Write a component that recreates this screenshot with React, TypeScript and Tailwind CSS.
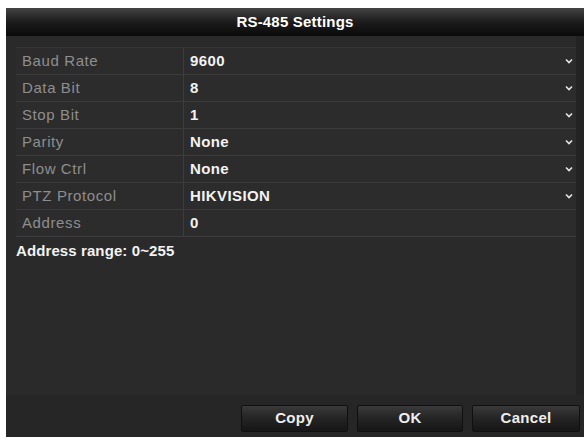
const rows: { label: string; value: string; select: boolean }[] = [
  { label: "Baud Rate", value: "9600", select: true },
  { label: "Data Bit", value: "8", select: true },
  { label: "Stop Bit", value: "1", select: true },
  { label: "Parity", value: "None", select: true },
  { label: "Flow Ctrl", value: "None", select: true },
  { label: "PTZ Protocol", value: "HIKVISION", select: true },
  { label: "Address", value: "0", select: false },
];

const Chevron = () => (
  <svg width="8" height="6" viewBox="0 0 8 6" className="mr-[3px]">
    <polyline points="1,1.5 4,4.5 7,1.5" fill="none" stroke="#e6e6e6" strokeWidth="1.6" />
  </svg>
);

const Button = ({ text, width }: { text: string; width: string }) => (
  <button
    className={`${width} h-[27px] rounded-[2px] border border-[#101010] bg-gradient-to-b from-[#3a3a3a] via-[#242424] to-[#161616] text-[15px] font-bold tracking-[0.3px] text-[#eeeeee]`}
  >
    {text}
  </button>
);

export default function App() {
  return (
    <div
      className="w-[584px] h-[440px] bg-white pt-[8px] pl-[6px] pb-[3px]"
      style={{ fontFamily: '"Liberation Sans", Arial, sans-serif' }}
    >
      <div className="flex h-full flex-col bg-[#2a2a2a]">
        {/* Title */}
        <div className="flex h-[28px] items-center justify-center bg-gradient-to-b from-[#444444] via-[#1c1c1c] to-[#0a0a0a] text-[15px] font-bold tracking-[0.2px] text-white">
          RS-485 Settings
        </div>

        {/* Body */}
        <div className="flex flex-1 flex-col border-r-[8px] border-[#232323] pl-[10px] pt-[11px]">
          <div className="border-t border-[#363636]">
            {rows.map((r) => (
              <div key={r.label} className="flex h-[27px] border-b border-[#3c3c3c] bg-[#2c2c2c]">
                <div className="flex w-[168px] items-center border-r border-[#3c3c3c] pl-[6px] text-[15px] tracking-[0.6px] text-[#8e8e8e]">
                  {r.label}
                </div>
                <div className="flex flex-1 items-center justify-between pl-[6px] text-[15px] font-bold tracking-[0.4px] text-[#f2f2f2]">
                  <span>{r.value}</span>
                  {r.select && <Chevron />}
                </div>
              </div>
            ))}
          </div>
          <div className="mt-[3px] text-[15px] font-bold tracking-[0.1px] text-[#f2f2f2]">
            Address range: 0~255
          </div>
        </div>

        {/* Footer */}
        <div className="flex h-[42px] items-start justify-end gap-[9px] bg-[#262626] pt-[10px] pr-[4px]">
          <Button text="Copy" width="w-[107px]" />
          <Button text="OK" width="w-[106px]" />
          <Button text="Cancel" width="w-[108px]" />
        </div>
      </div>
    </div>
  );
}
